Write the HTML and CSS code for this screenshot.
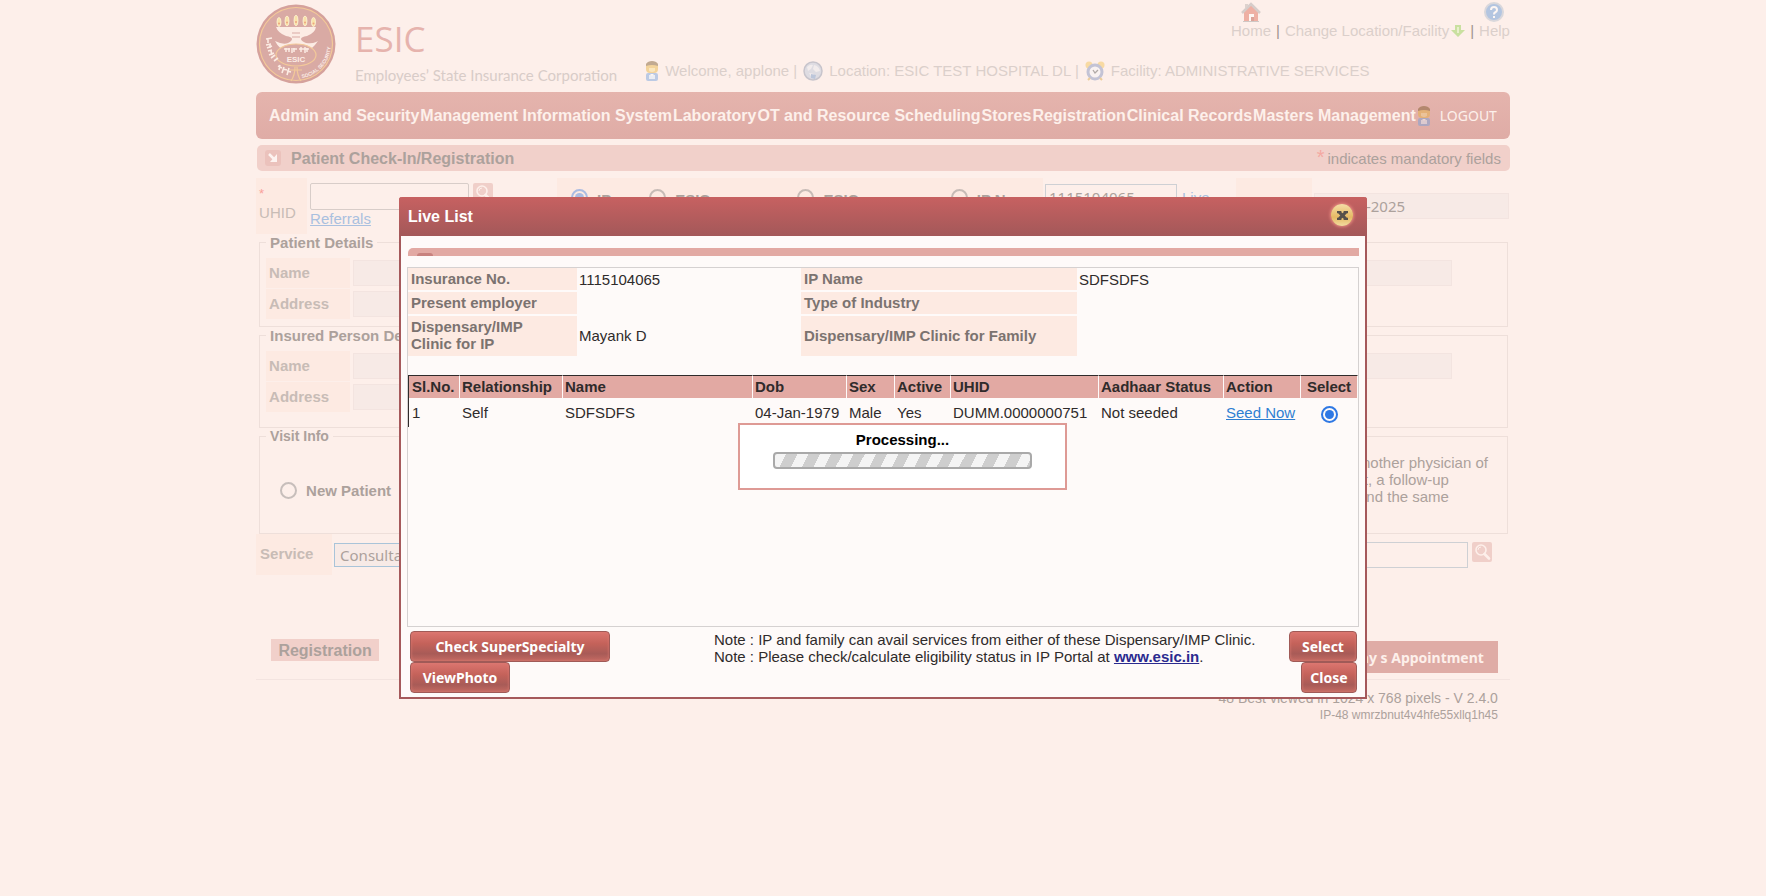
FILE: index.html
```html
<!DOCTYPE html>
<html lang="en">
<head>
<meta charset="utf-8">
<title>Patient Check-In/Registration</title>
<link rel="stylesheet" href="styles.css">
</head>
<body>
<svg class="defs" aria-hidden="true">
  <symbol id="person" viewBox="0 0 14 20">
    <rect x="1" y="1" width="12" height="11" rx="4" fill="#e8b23c"/>
    <path d="M1 5V3q2-3 6-3t6 3v2q-6-2-12 0z" fill="#7a5526"/>
    <path d="M4 7h6v3q-3 2-6 0z" fill="#f7dc8a"/>
    <rect x="1" y="12" width="12" height="8" rx="2" fill="#6f9fdd"/>
    <path d="M4 14h6v4H4z" fill="#d6ebff"/>
    <path d="M5 13l2 2 2-2z" fill="#fff"/>
  </symbol>
  <symbol id="search" viewBox="0 0 20 20">
    <rect width="20" height="20" rx="2" fill="#f0cfc9"/>
    <circle cx="9" cy="8" r="5" fill="none" stroke="#fdefea" stroke-width="1.6"/>
    <path d="M6 8q0-3 3-3" fill="none" stroke="#fdefea"/>
    <path d="M12.500 12l4.500 4.500" stroke="#fdefea" stroke-width="2.600" stroke-linecap="round"/>
  </symbol>
</svg>
<div class="page">
  <header class="top">
    <div class="brand">
      <svg class="seal" viewBox="0 0 80 80" aria-label="ESIC seal">
        <defs>
          <path id="arcR" d="M46 74A34 34 0 0 0 74 33"/>
        </defs>
        <circle cx="40" cy="40" r="39.500" fill="#d5a19c"/>
        <circle cx="40" cy="40" r="36.500" fill="#d9aaa4" stroke="#f3c999" stroke-width="1.200"/>
        <g fill="#f9e2a8" stroke="#fdf3d5" stroke-width=".8">
          <ellipse cx="23" cy="18" rx="2" ry="4.500"/><ellipse cx="31" cy="17" rx="2" ry="5"/><ellipse cx="40" cy="16.500" rx="2" ry="5.300"/><ellipse cx="49" cy="17" rx="2" ry="5"/><ellipse cx="57.500" cy="18" rx="2" ry="4.500"/>
        </g>
        <g fill="#eda57f"><circle cx="23" cy="19.500" r="1"/><circle cx="31" cy="18.500" r="1"/><circle cx="40" cy="18" r="1"/><circle cx="49" cy="18.500" r="1"/><circle cx="57.500" cy="19.500" r="1"/></g>
        <path d="M20 23h40q-1 6-9 9-6 1-6 3t5 4q6 1 10-1l2-1q-6 9-13 11H31q-8-3-12-11 8 4 13 2 4-2 4-4t-6-3q-8-3-10-9z" fill="#fcece4"/>
        <path d="M36 29h8M36 33h8" stroke="#d9aaa4"/>
        <ellipse cx="40" cy="51" rx="20" ry="11" fill="#d9aaa4" stroke="#f3c999" stroke-width="1.200"/>
        <path d="M39 63q0 8-4 14M41 63q0 8 4 14M34 66h12" stroke="#f3c999" stroke-width="1.200" fill="none"/>
        <path d="M28 45h6m1 0h6m2 0h10M30 44v4m3-4v4m5-4v4m-2-2v3m9-6v5m4-5v6m2-5v4" stroke="#fcece4" stroke-width="1.500"/>
        <text x="40" y="58" text-anchor="middle" class="seal-name">ESIC</text>
        <text class="seal-ring"><textPath href="#arcR">SOCIAL SECURITY</textPath></text>
        <path d="M10 35l6-1M12 35v4M10 41l5-1M11 44l5-2M14 40v4M12 47l4-1M13 51l5-2M15 47l1 4M15 54l4-3M18 57l4-3" stroke="#fcece4" stroke-width="1.600" fill="none"/>
        <path d="M22 62l4 2M24 61l-1 5M28 63l-2 6M27 65l4 1M33 64l-2 7M31 67l4 1" stroke="#fcece4" stroke-width="1.600" fill="none"/>
      </svg>
      <div class="names">
        <div class="name">ESIC</div>
        <div class="tag">Employees’ State Insurance Corporation</div>
      </div>
    </div>
    <div class="headinfo">
      <div class="quick">
        <a class="stack" href="#"><svg class="ico20" viewBox="0 0 20 20"><path d="M3 10v10h14V10l-7-7z" fill="#dd6550"/><path d="M1 11l9-9 9 9" fill="none" stroke="#a9a5a5" stroke-width="2.500"/><path d="M4 2v5l3-3V2z" fill="#b8b0ae"/><path d="M8 12h5v8H8z" fill="#fff"/><path d="M10 15h3v5h-3z" fill="#b34a3a"/><path d="M2 19.500h16" stroke="#999"/></svg>Home</a>
        <span class="bar">|</span>
        <a class="flat" href="#">Change Location/Facility<svg class="ico14" viewBox="0 0 14 14"><path d="M4 1h6v5h4l-7 7-7-7h4z" fill="#8bce47"/><path d="M6 3h2v6H6z" fill="#d3f0ab"/></svg></a>
        <span class="bar">|</span>
        <a class="stack" href="#"><svg class="ico20" viewBox="0 0 20 20"><circle cx="10" cy="10" r="9" fill="#5b93d6" stroke="#aebccb" stroke-width="2"/><path d="M7 8q0-3 3-3t3 3q0 1.500-2 2.500-1 .5-1 2M10 14v2" stroke="#fff" stroke-width="2" fill="none"/></svg>Help</a>
      </div>
      <div class="status">
        <svg class="ico-person"><use href="#person"/></svg><span>Welcome, applone |</span>
        <svg class="ico20" viewBox="0 0 20 20"><circle cx="10" cy="10" r="9" fill="#b9c6da" stroke="#8892a8" stroke-width="1.500"/><path d="M4 6q3-3 6-2l-2 4-3 2zM11 4q5 1 6 6l-4 1-3-3zM6 12l5 1-2 4z" fill="#e6e9ef"/><path d="M8 13l5 1-1 4-4-1z" fill="#6f95c8"/></svg>
        <span>Location: ESIC TEST HOSPITAL DL |</span>
        <svg class="ico20" viewBox="0 0 20 20"><circle cx="4" cy="4" r="3.500" fill="#f2c14e"/><circle cx="16" cy="4" r="3.500" fill="#f2c14e"/><circle cx="10" cy="11" r="7" fill="#f5f6fa" stroke="#7d8fbd" stroke-width="3"/><path d="M8 9l2 3 3-3" stroke="#555" stroke-width="1.300" fill="none"/><path d="M3 19l2-2M17 19l-2-2" stroke="#d9a63c" stroke-width="2"/></svg>
        <span>Facility: ADMINISTRATIVE SERVICES</span>
      </div>
    </div>
  </header>

  <nav class="nav">
    <a href="#">Admin and Security</a><a href="#">Management Information System</a><a href="#">Laboratory</a><a href="#">OT and Resource Scheduling</a><a href="#">Stores</a><a href="#">Registration</a><a href="#">Clinical Records</a><a href="#">Masters Management</a><a class="logout" href="#"><svg class="ico-person"><use href="#person"/></svg>LOGOUT</a>
  </nav>

  <div class="title">
    <svg class="ico16" viewBox="0 0 16 16"><rect width="16" height="16" rx="3" fill="#ebc2bc"/><path d="M4 4l6 6" stroke="#fdf3f0" stroke-width="2.500"/><path d="M12 4v8H5z" fill="#fdf3f0"/></svg>
    <h1>Patient Check-In/Registration</h1>
    <span class="mand"><b>*</b>indicates mandatory fields</span>
  </div>

  <div class="idrow">
    <label class="uhid" for="uhid"><i>*</i>UHID</label>
    <div class="uhidbox">
      <div class="inline"><input id="uhid" type="text"><svg class="ico20s"><use href="#search"/></svg></div>
      <a href="#">Referrals</a>
    </div>
    <div class="kinds">
      <label><input type="radio" name="kind" checked>IP</label>
      <label><input type="radio" name="kind">ESIC</label>
      <label><input type="radio" name="kind">ESIC</label>
      <label><input type="radio" name="kind">IP No.</label>
    </div>
    <div class="ipno"><input type="text" value="1115104065" aria-label="IP No."><a href="#">Live</a></div>
    <div class="tint"></div>
    <div class="date"><input type="text" value="07-Apr-2025" aria-label="Date" readonly></div>
  </div>

  <fieldset class="people">
    <legend>Patient Details</legend>
    <div class="line"><label for="n1">Name</label><input id="n1" type="text" readonly></div>
    <div class="line"><label for="a1">Address</label><input id="a1" class="short" type="text" readonly></div>
  </fieldset>
  <fieldset class="people second">
    <legend>Insured Person Details</legend>
    <div class="line"><label for="n2">Name</label><input id="n2" type="text" readonly></div>
    <div class="line"><label for="a2">Address</label><input id="a2" class="short" type="text" readonly></div>
  </fieldset>
  <fieldset class="visit">
    <legend>Visit Info</legend>
    <label><input type="radio" name="visit">New Patient</label>
    <div class="help"><p>another physician of</p><p class="in">visit, a follow-up</p><p class="in">and the same</p></div>
  </fieldset>

  <div class="service">
    <label for="svc">Service</label>
    <select id="svc"><option>Consultation</option></select>
    <input type="text" aria-label="Service search"><svg class="ico20s"><use href="#search"/></svg>
  </div>

  <div class="actions">
    <button class="reg">Registration</button>
    <button class="appt">Today s Appointment</button>
  </div>
  <footer class="foot">
    <div>48 Best viewed in 1024 x 768 pixels - V 2.4.0</div>
    <div class="host">IP-48 wmrzbnut4v4hfe55xllq1h45</div>
  </footer>
</div>

<div class="overlay">
  <section class="modal" role="dialog" aria-label="Live List">
    <header class="mhead"><h2>Live List</h2><button class="x" aria-label="Close dialog"><svg viewBox="0 0 10 10"><path d="M0 1h4v1l1 1 1-1V1h4v2H9L7 5l2 2h1v2H6V8L5 7 4 8v1H0V7h1l2-2-2-2H0z" fill="#55504b"/></svg></button></header>
    <div class="mbody">
      <div class="strip"><span></span></div>
      <div class="box">
        <table class="info">
          <colgroup><col class="i1"><col class="i2"><col class="i3"><col></colgroup>
          <tr><th>Insurance No.</th><td>1115104065</td><th>IP Name</th><td>SDFSDFS</td></tr>
          <tr><th>Present employer</th><td></td><th>Type of Industry</th><td></td></tr>
          <tr><th>Dispensary/IMP<br>Clinic for IP</th><td>Mayank D</td><th>Dispensary/IMP Clinic for Family</th><td></td></tr>
        </table>
        <table class="list">
          <colgroup><col class="c1"><col class="c2"><col class="c3"><col class="c4"><col class="c5"><col class="c6"><col class="c7"><col class="c8"><col class="c9"><col></colgroup>
          <thead><tr><th>Sl.No.</th><th>Relationship</th><th>Name</th><th>Dob</th><th>Sex</th><th>Active</th><th>UHID</th><th>Aadhaar Status</th><th>Action</th><th class="mid">Select</th></tr></thead>
          <tbody><tr><td>1</td><td>Self</td><td>SDFSDFS</td><td>04-Jan-1979</td><td>Male</td><td>Yes</td><td>DUMM.0000000751</td><td>Not seeded</td><td><a href="#">Seed Now</a></td><td class="mid"><input type="radio" name="row" checked aria-label="Select row 1"></td></tr></tbody>
        </table>
      </div>
      <div class="mfoot">
        <div class="btns"><button class="btn wide">Check SuperSpecialty</button><button class="btn photo">ViewPhoto</button></div>
        <div class="notes">Note : IP and family can avail services from either of these Dispensary/IMP Clinic.<br>Note : Please check/calculate eligibility status in IP Portal at <a href="#">www.esic.in</a>.</div>
        <div class="btns end"><button class="btn sel">Select</button><button class="btn cls">Close</button></div>
      </div>
    </div>
    <div class="busy"><b>Processing...</b><div class="progress"></div></div>
  </section>
</div>
</body>
</html>
```

FILE: styles.css
```css
* { box-sizing: border-box; }
body { margin: 0; background: #fdefea; font: 15px/17px "Liberation Sans", Arial, sans-serif; color: #aca19c; }
a { color: inherit; text-decoration: none; }
button, input, select { font: inherit; color: inherit; margin: 0; }
h1, h2, p { margin: 0; }
.defs { position: absolute; width: 0; height: 0; }
.page { width: 71%; margin: 0 auto; }
input[type=radio] { appearance: none; display: grid; place-items: center; width: 17px; height: 17px; flex: none; margin: 0; border: 2px solid #767676; border-radius: 50%; }
input[type=radio]:checked { border-color: #2f78e4; }
input[type=radio]:checked::before { content: ""; width: 9px; height: 9px; border-radius: 50%; background: #2f78e4; }
.page input[type=radio] { opacity: .4; }

.top { display: flex; justify-content: space-between; height: 92px; }
.brand { display: flex; gap: 19px; padding-top: 4px; }
.seal { width: 80px; height: 80px; }
.seal-name { font: bold 8px "Liberation Sans", sans-serif; fill: #fcece4; }
.seal-ring { font: bold 5px "Liberation Sans", sans-serif; fill: #fcece4; }
.name { font: 35px/40px "Open Sans", sans-serif; color: #e6b3ad; padding-top: 15px; }
.tag { font: 15px/20px Lato, sans-serif; color: #d8ccc8; padding-top: 6px; }
.headinfo { flex: 1; display: flex; flex-direction: column; justify-content: space-between; margin-left: 28px; color: #dbcfcb; padding-bottom: 11px; }
.quick { display: flex; justify-content: flex-end; align-items: flex-end; gap: 5px; padding-top: 2px; }
.stack { display: flex; flex-direction: column; align-items: center; }
.flat { display: flex; align-items: center; gap: 2px; }
.bar { color: #a0938e; }
.ico20, .ico14, .ico-person { opacity: .45; flex: none; }
.ico20 { width: 20px; height: 20px; }
.ico14 { width: 14px; height: 14px; }
.ico16 { width: 16px; height: 16px; }
.ico20s { width: 20px; height: 20px; flex: none; }
.ico-person { width: 14px; height: 20px; }
.status { display: flex; align-items: center; gap: 6px; }
.status span { padding-bottom: 2px; }

.nav { display: flex; justify-content: space-between; align-items: center; height: 47px; padding: 0 13px; border-radius: 6px; background: linear-gradient(#e5b4ad, #dfaca6); color: #fdf0eb; font-weight: bold; font-size: 16px; white-space: nowrap; }
.logout { display: flex; align-items: center; gap: 9px; font: 14px/20px "Noto Sans", sans-serif; }
.title { display: flex; align-items: center; height: 26px; margin: 6px 0 7px 1px; padding: 0 9px 0 8px; border-radius: 5px; background: #f1d0ca; }
.title h1 { font-size: 16px; padding-left: 10px; flex: 1; }
.mand b { font-size: 20px; font-weight: normal; color: #f4a9a2; padding-right: 3px; }

.idrow { display: grid; grid-template-columns: 51px 250fr 486fr 193fr 76px 198fr; height: 56px; }
.uhid { background: #fdeae2; padding: 8px 3px; color: #c8bcb6; line-height: 22px; }
.uhid i { display: block; color: #f9a09a; font: 13px/16px "Liberation Sans", sans-serif; }
.uhidbox { padding: 5px 3px; }
.inline { display: flex; gap: 4px; }
.inline input { width: 159px; height: 27px; border: 1px solid #d8cdc9; border-radius: 2px; background: transparent; }
.uhidbox a { color: #a9c0df; text-decoration: underline; }
.kinds { background: #fdeae2; display: grid; grid-template-columns: 78fr 148fr 153fr 92fr; padding: 11px 0 0 14px; font-weight: bold; }
.kinds label { display: flex; gap: 9px; align-items: flex-start; line-height: 21px; }
.ipno { display: flex; gap: 5px; padding: 6px 0 0 2px; align-items: flex-start; color: #a9c0df; }
.ipno input { width: 132px; height: 26px; padding: 0 3px; border: 1px solid #ced0d4; background: transparent; color: #aca19c; font: 15px "Noto Sans", sans-serif; }
.ipno a { padding-top: 5px; }
.tint { background: #fdeae2; margin-bottom: 8px; }
.date { padding: 15px 1px 0 2px; }
.date input, .line input { width: 100%; height: 26px; background: #f7eae6; border: 1px solid #f3e4e0; }
.date input { font: 15px "Noto Sans", sans-serif; padding: 0 4px; }

fieldset { margin: 0 2px 0 3px; border: 1px solid #eedfda; padding: 0; min-width: 0; }
legend { margin-left: 7px; padding: 0 4px; font-weight: bold; }
.people { height: 93px; padding: 6px 55px 0 6px; }
.people legend { margin-left: 0; }
.line { display: flex; align-items: center; gap: 3px; height: 31px; }
.line label { width: 84px; height: 30px; padding: 0 3px; background: #fdeae2; color: #c8bcb6; font-weight: bold; line-height: 30px; }
.line input { flex: 1; }
.line .short { flex: none; width: 60%; }
.second { height: 101px; }
.visit { display: flex; justify-content: space-between; height: 106px; padding: 37px 19px 0 20px; }
.visit legend { margin-left: -14px; font-size: 14px; }
.visit label { display: flex; gap: 9px; font-weight: bold; }
.help { text-align: right; margin-top: -28px; }
.help .in { padding-right: 39px; }

.service { display: flex; align-items: flex-start; height: 42px; padding-right: 18px; gap: 4px; }
.service label { width: 76px; height: 41px; margin-right: -2px; padding: 11px 4px; background: #fdeae2; color: #c8bcb6; font-weight: bold; }
.service select { appearance: none; width: 200px; height: 24px; margin-top: 9px; padding: 0 5px; border: 1px solid #a9c4d9; border-radius: 0; background: #f7eae6; font: 15px "Noto Sans", sans-serif; }
.service input { width: 250px; height: 26px; margin: 8px 0 0 auto; border: 1px solid #ced0d4; background: transparent; }
.service svg { margin-top: 8px; }
.actions { display: flex; justify-content: space-between; align-items: flex-end; height: 104px; padding: 0 12px 6px 15px; border-bottom: 1px solid #f3e4e0; }
.actions button { border: 0; font-weight: bold; }
.reg { height: 22px; width: 108px; margin-bottom: 12px; padding: 0; background: #f1d0ca; font-size: 16px; }
.actions .appt { height: 32px; padding: 0 14px; background: #dfaca6; color: #fdf0eb; font: bold 14px "Noto Sans", sans-serif; }
.foot { padding: 10px 12px 0 0; text-align: right; font-size: 14px; }
.host { font-size: 12px; }

.overlay { position: fixed; inset: 0; display: flex; align-items: center; justify-content: center; }
.modal { position: relative; width: 968px; border: 2px solid #a5595b; border-top: 0; border-radius: 3px 3px 0 0; background: #fefaf9; color: #2f2b2b; }
.mhead { display: flex; justify-content: space-between; align-items: center; height: 39px; margin: 0 -2px; padding: 0 14px 0 9px; border-radius: 3px 3px 0 0; background: linear-gradient(#c76161, #a35859); color: #fff; }
.mhead h2 { font-size: 16px; }
.x { display: grid; place-items: center; width: 22px; height: 22px; margin-bottom: 3px; padding: 0; border: 0; border-radius: 50%; background: linear-gradient(#f5dda6, #e5b964 60%, #f3dca0); box-shadow: 0 0 3px 1px #e98a80; }
.x svg { width: 11px; height: 11px; }
.mbody { padding: 12px 6px 4px; }
.strip { height: 8px; margin-left: 1px; border-radius: 5px 0 0 0; background: #e2a9a3; padding: 5px 0 0 9px; }
.strip span { display: block; width: 16px; height: 3px; border-radius: 3px 3px 0 0; background: #c8827e; }
.box { height: 360px; margin-top: 11px; border: 1px solid #d5d1d1; }
table { width: 100%; table-layout: fixed; border-collapse: separate; text-align: left; }
.info { border-spacing: 0; }
.i1 { width: 169px; } .i2 { width: 224px; } .i3 { width: 276px; }
.info th, .info td { height: 24px; padding: 0 3px 2px; }
.info td { padding-left: 2px; }
.info th { background: #fdeae2; border-bottom: 2px solid #fefaf9; color: #7b7370; }
.info tr:last-child th { height: 40px; border: 0; }
.list { margin-top: 19px; border-spacing: 0; }
.list th { height: 23px; padding: 0 2px 2px; background: #e2a9a3; border-top: 1px solid #2f2b2b; border-right: 1px solid #fefaf9; white-space: nowrap; }
.list td { height: 29px; padding: 0 2px; white-space: nowrap; }
.list th:first-child, .list td:first-child { border-left: 1px solid #2f2b2b; padding-left: 3px; }
.list .mid { text-align: center; }
.list input { margin: 3px auto 0; }
.list a { color: #2f7fd2; text-decoration: underline; }
.c1 { width: 52px; } .c2 { width: 103px; } .c3 { width: 190px; } .c4 { width: 94px; } .c5 { width: 48px; } .c6 { width: 56px; } .c7 { width: 148px; } .c8 { width: 125px; } .c9 { width: 77px; }
.mfoot { display: flex; padding: 4px 2px 0 3px; }
.btns { display: flex; flex-direction: column; width: 304px; }
.end { width: auto; margin-left: auto; align-items: flex-end; }
.notes a { color: #2b2a8f; font-weight: bold; text-decoration: underline; }
.btn { height: 31px; padding: 0 0 1px; border: 1px solid #a05a57; border-radius: 4px; background: linear-gradient(#dc756f, #c4625a 40%, #a85b57 75%, #c46a62); box-shadow: inset 0 0 3px #d97a72; color: #fff; font: bold 14px "Noto Sans", sans-serif; }
.wide { width: 200px; } .photo { width: 100px; } .sel { width: 68px; } .cls { width: 56px; }
.busy { position: absolute; left: 337px; top: 226px; width: 329px; height: 67px; padding: 6px 33px; border: 2px solid #de9a95; background: #fff; color: #000; text-align: center; }
.progress { height: 17px; margin-top: 4px; border: 2px solid #a9a9a9; border-radius: 4px; background: repeating-linear-gradient(117deg, #f4f4f4 0 10px, #cecece 10px 20px); }
```
